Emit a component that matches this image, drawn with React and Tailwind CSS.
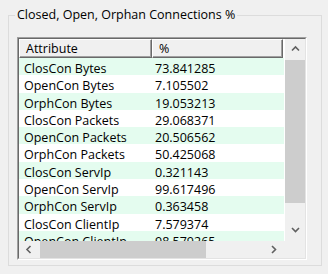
const rows = [
  ['ClosCon Bytes', '73.841285'],
  ['OpenCon Bytes', '7.105502'],
  ['OrphCon Bytes', '19.053213'],
  ['ClosCon Packets', '29.068371'],
  ['OpenCon Packets', '20.506562'],
  ['OrphCon Packets', '50.425068'],
  ['ClosCon ServIp', '0.321143'],
  ['OpenCon ServIp', '99.617496'],
  ['OrphCon ServIp', '0.363458'],
  ['ClosCon ClientIp', '7.579374'],
  ['OpenCon ClientIp', '98.579265'],
];

const Chevron = ({ dir }) => {
  const d = {
    up: 'M1 5.5 L4.5 2 L8 5.5',
    down: 'M1 2 L4.5 5.5 L8 2',
    left: 'M5.5 1 L2 4.5 L5.5 8',
    right: 'M2 1 L5.5 4.5 L2 8',
  }[dir];
  return (
    <svg width="9" height="9" viewBox="0 0 9 9" fill="none">
      <path d={d} stroke="#606060" strokeWidth="1.6" />
    </svg>
  );
};

const HeaderCell = ({ children, w }) => (
  <div
    className={`${w} h-[19px] shrink-0 bg-[#f0f0f0] border-t border-l border-t-white border-l-white border-r border-b border-r-[#696969] border-b-[#696969] shadow-[inset_-1px_-1px_0_#a0a0a0] pl-[6px] pt-[1px] leading-[16px]`}
  >
    {children}
  </div>
);

export default function App() {
  return (
    <div className="w-[328px] h-[274px] bg-[#f0f0f0] pt-[6px] pl-[8px] font-['Open_Sans',sans-serif] text-[12.5px] text-black">
      <fieldset className="w-[314px] h-[260px] border border-[#dcdcdc]">
        <legend className="ml-[6px] px-[2px] leading-[18px]">Closed, Open, Orphan Connections %</legend>
        <div className="mt-[13px] ml-[8px] w-[290px] h-[223px] border border-t-[#a0a0a0] border-l-[#a0a0a0] border-r-white border-b-white">
          <div className="w-full h-full border border-t-[#696969] border-l-[#696969] border-r-[#e3e3e3] border-b-[#e3e3e3] grid grid-cols-[266px_20px] grid-rows-[202px_17px] bg-white">
            <div className="overflow-hidden">
              <div className="flex">
                <HeaderCell w="w-[133px]">Attribute</HeaderCell>
                <HeaderCell w="w-[131px]">%</HeaderCell>
              </div>
              {rows.map(([a, v], i) => (
                <div
                  key={a}
                  className={`flex w-[265px] h-[17.3px] ${i % 2 === 0 ? 'bg-[#e4fcef]' : 'bg-white'}`}
                >
                  <div className="w-[133px] pl-[5px] pt-[3px] leading-[15px] whitespace-nowrap">{a}</div>
                  <div className="w-[131px] pl-[3px] pt-[3px] leading-[15px] whitespace-nowrap">{v}</div>
                </div>
              ))}
            </div>
            <div className="flex flex-col bg-[#f0f0f0]">
              <div className="h-[21px] flex items-center justify-center">
                <Chevron dir="up" />
              </div>
              <div className="h-[143px] bg-[#cdcdcd]" />
              <div className="flex-1" />
              <div className="h-[21px] flex items-center justify-center">
                <Chevron dir="down" />
              </div>
            </div>
            <div className="flex bg-[#f0f0f0]">
              <div className="w-[21px] flex items-center justify-center">
                <Chevron dir="left" />
              </div>
              <div className="w-[166px] bg-[#cdcdcd]" />
              <div className="flex-1" />
              <div className="w-[21px] flex items-center justify-center">
                <Chevron dir="right" />
              </div>
            </div>
            <div className="bg-[#f0f0f0]" />
          </div>
        </div>
      </fieldset>
    </div>
  );
}
